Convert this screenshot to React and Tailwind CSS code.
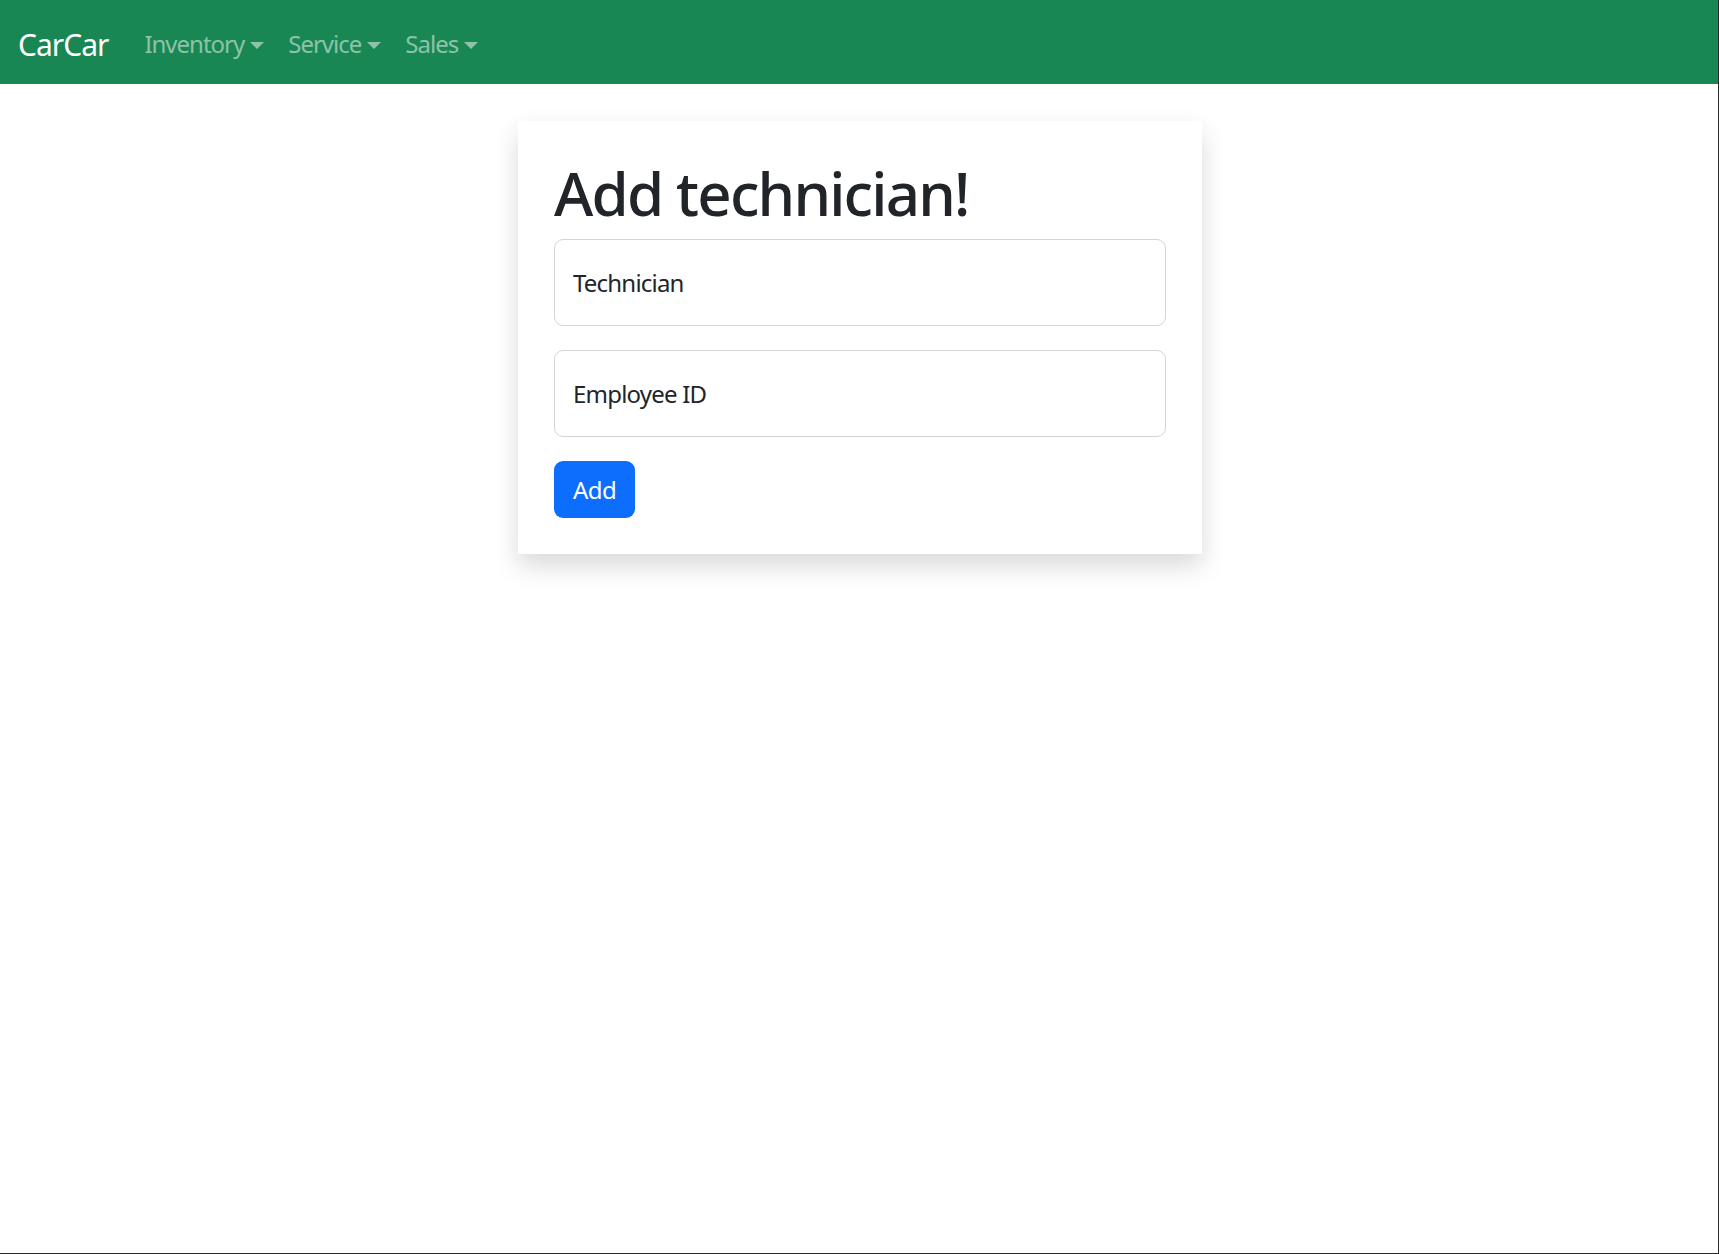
import { useState } from "react";

const font = { fontFamily: '"Segoe UI", "Noto Sans", "Open Sans", sans-serif' };

function NavDropdown({ label }) {
    return (
        <a className="flex items-center px-[12px] py-[12px] text-[24px] leading-[36px] tracking-[-1px] text-[#8cc3a9] cursor-pointer">
            {label}
            <span className="ml-[6px] mt-[2px] inline-block w-0 h-0 border-t-[7px] border-t-[#8cc3a9] border-x-[7px] border-x-transparent"></span>
        </a>
    );
}

function FloatingInput({ placeholder, value, onChange }) {
    return (
        <div className="mb-[24px]">
            <input
                value={value}
                onChange={onChange}
                placeholder={placeholder}
                className="w-full h-[87px] px-[18px] text-[24px] tracking-[-0.8px] text-[#212529] placeholder:text-[#212529] border border-[#d3d6da] rounded-[9px] bg-white outline-none"
            />
        </div>
    );
}

export default function App() {
    const [name, setName] = useState("");
    const [employeeId, setEmployeeId] = useState("");

    return (
        <div style={font} className="w-[1719px] h-[1254px] bg-white border-r border-b border-[#2a2a2a] overflow-hidden">
            <nav className="h-[84px] bg-[#198754] flex items-center px-[18px] pt-[4px]">
                <a className="text-[30px] leading-[45px] tracking-[-1px] text-white mr-[24px]">CarCar</a>
                <div className="flex items-center">
                    <NavDropdown label="Inventory" />
                    <NavDropdown label="Service" />
                    <NavDropdown label="Sales" />
                </div>
            </nav>
            <div className="w-[1440px] mx-auto px-[18px]">
                <div className="ml-[361px] w-[684px]">
                    <div className="mt-[37px] p-[36px] bg-white shadow-[0_12px_24px_rgba(0,0,0,0.15)]">
                        <h1 className="text-[60px] leading-[72px] font-medium tracking-[-1.8px] text-[#212529] mb-[10px]">
                            Add technician!
                        </h1>
                        <form onSubmit={(e) => e.preventDefault()}>
                            <FloatingInput
                                placeholder="Technician"
                                value={name}
                                onChange={(e) => setName(e.target.value)}
                            />
                            <FloatingInput
                                placeholder="Employee ID"
                                value={employeeId}
                                onChange={(e) => setEmployeeId(e.target.value)}
                            />
                            <button className="h-[57px] px-[19px] text-[24px] tracking-[-0.5px] text-white bg-[#0d6efd] rounded-[9px]">
                                Add
                            </button>
                        </form>
                    </div>
                </div>
            </div>
        </div>
    );
}
